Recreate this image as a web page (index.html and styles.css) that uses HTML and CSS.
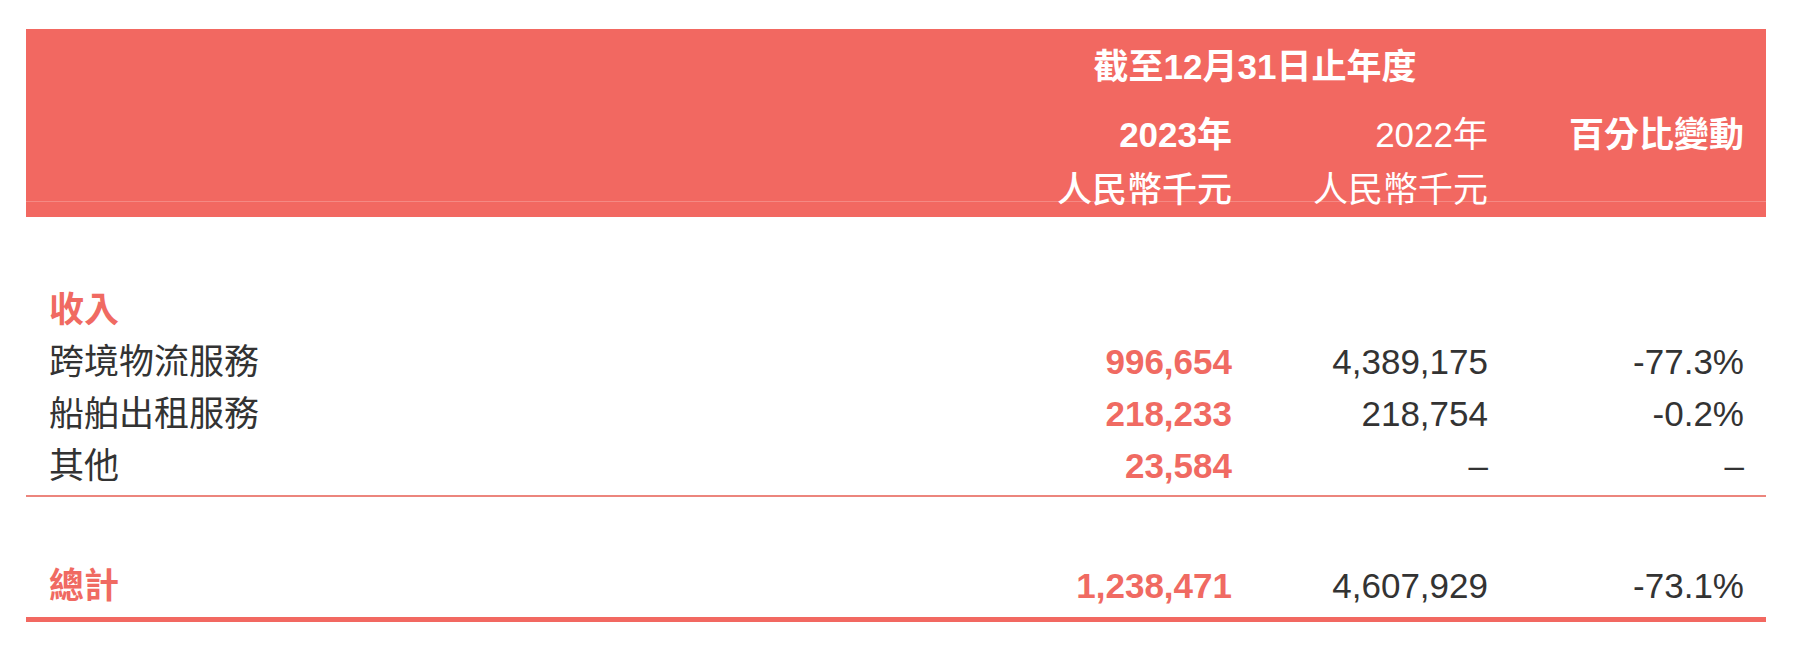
FILE: index.html
```html
<!DOCTYPE html>
<html lang="zh-Hant">
<head>
<meta charset="utf-8">
<title>收入</title>
<link rel="stylesheet" href="styles.css">
</head>
<body>
<div class="table">
  <div class="head">
    <div class="row title-row">
      <div class="title">截至12月31日止年度</div>
    </div>
    <div class="row year-row">
      <div></div>
      <div class="num bold">2023年</div>
      <div class="num">2022年</div>
      <div class="num bold">百分比變動</div>
    </div>
    <div class="row unit-row">
      <div></div>
      <div class="num medium">人民幣千元</div>
      <div class="num">人民幣千元</div>
      <div></div>
    </div>
  </div>
  <div class="body">
    <div class="row line">
      <div class="label section">收入</div>
    </div>
    <div class="row line">
      <div class="label">跨境物流服務</div>
      <div class="num hi">996,654</div>
      <div class="num">4,389,175</div>
      <div class="num">-77.3%</div>
    </div>
    <div class="row line">
      <div class="label">船舶出租服務</div>
      <div class="num hi">218,233</div>
      <div class="num">218,754</div>
      <div class="num">-0.2%</div>
    </div>
    <div class="row line">
      <div class="label">其他</div>
      <div class="num hi">23,584</div>
      <div class="num">–</div>
      <div class="num">–</div>
    </div>
  </div>
  <div class="total">
    <div class="row line">
      <div class="label section">總計</div>
      <div class="num hi">1,238,471</div>
      <div class="num">4,607,929</div>
      <div class="num">-73.1%</div>
    </div>
  </div>
</div>
</body>
</html>
```
FILE: styles.css
```css
html, body {
  margin: 0;
  padding: 0;
  background: #ffffff;
}

body {
  font-family: "Liberation Sans", "Noto Sans CJK TC", sans-serif;
  font-size: 35px;
  color: #333333;
}

.table {
  margin: 29px 44px 0 26px;
}

.row {
  display: grid;
  grid-template-columns: 1fr 256px 256px 256px;
  padding: 0 22px 0 23px;
}

.head {
  background: #f26861;
  color: #ffffff;
  padding-bottom: 15px;
}

.title-row {
  height: 74px;
  line-height: 76px;
}

.title {
  grid-column: 2 / 4;
  text-align: center;
  padding-left: 46px;
  font-weight: bold;
  white-space: nowrap;
}

.year-row {
  height: 64px;
  line-height: 64px;
}

.unit-row {
  height: 34px;
  line-height: 46px;
  border-bottom: 1px solid rgba(255, 255, 255, 0.22);
}

.num {
  text-align: right;
  white-space: nowrap;
}

.bold {
  font-weight: bold;
}

.medium {
  font-weight: 500;
}

.body {
  padding-top: 67px;
  padding-bottom: 3px;
  border-bottom: 2px solid #ec857d;
}

.line {
  height: 52px;
  line-height: 52px;
}

.label {
  white-space: nowrap;
}

.section {
  color: #f06a62;
  font-weight: bold;
}

.hi {
  color: #f06a62;
  font-weight: bold;
}

.total {
  padding-top: 63px;
  padding-bottom: 5px;
  border-bottom: 5px solid #f26861;
}
```
